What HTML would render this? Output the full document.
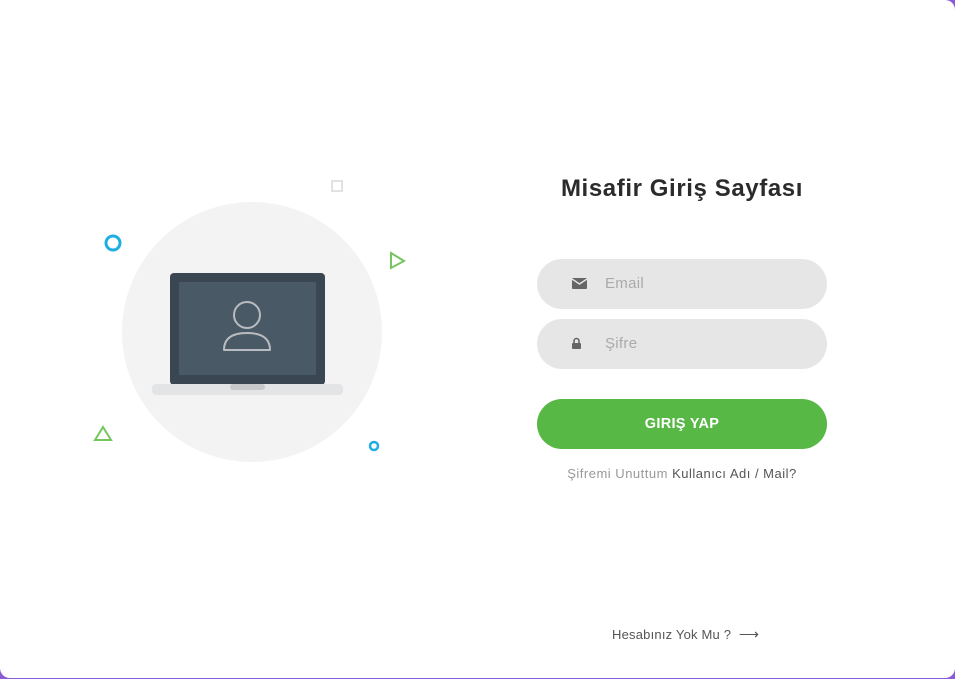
<!DOCTYPE html>
<html><head><meta charset="utf-8"><style>
*{margin:0;padding:0;box-sizing:border-box}
html,body{width:955px;height:679px;overflow:hidden;background:#8e5bd8}
.card{position:absolute;left:0;top:0;width:955px;height:678px;background:#fff;border-radius:0 10px 10px 10px;font-family:"Liberation Sans",sans-serif}
.abs{position:absolute}
h1{position:absolute;left:482px;width:400px;top:175px;text-align:center;font-size:24px;font-weight:bold;color:#2b2b2b;letter-spacing:0.6px}
.inp{position:absolute;left:537px;width:290px;height:50px;border-radius:25px;background:#e6e6e6;color:#aaa;font-size:15px;line-height:50px;padding-left:68px;letter-spacing:0.3px}
.btn{position:absolute;left:537px;top:399px;width:290px;height:50px;border-radius:25px;background:#57b846;color:#fff;font-weight:bold;font-size:14.5px;text-align:center;line-height:50px;letter-spacing:0.3px}
.fg{position:absolute;left:482px;width:400px;top:466px;text-align:center;font-size:13px;color:#999;letter-spacing:0.5px}
.fg b{font-weight:normal;color:#555}
.acc{position:absolute;left:612px;top:626px;font-size:13px;color:#555;letter-spacing:0.2px}
</style></head><body><div class="card">
<svg class="abs" style="left:0;top:0" width="480" height="500">
<circle cx="252" cy="332" r="130" fill="#f3f3f3"/>
<rect x="170" y="273" width="155" height="112" rx="4" fill="#3a4651"/>
<rect x="179" y="282" width="137" height="93" fill="#4a5966"/>
<rect x="152" y="384" width="191" height="11" rx="4" fill="#e3e4e6"/>
<rect x="230" y="384" width="35" height="6" rx="3" fill="#c8c9cb"/>
<circle cx="247" cy="315" r="13" fill="none" stroke="#b8bcc0" stroke-width="2"/>
<path d="M224 350 Q224 333 247 333 Q270 333 270 350 Z" fill="none" stroke="#b8bcc0" stroke-width="2" stroke-linejoin="round"/>
<circle cx="113" cy="243" r="7" fill="none" stroke="#1eaee3" stroke-width="3"/>
<circle cx="374" cy="446" r="4" fill="none" stroke="#1eaee3" stroke-width="2.5"/>
<rect x="332" y="181" width="10" height="10" fill="none" stroke="#e2e2e2" stroke-width="2"/>
<path d="M391 253 L404 261 L391 268 Z" fill="none" stroke="#74c65d" stroke-width="2"/>
<path d="M103 427 L111 440 L95 440 Z" fill="none" stroke="#74c65d" stroke-width="2"/>
</svg>
<h1>Misafir Giriş Sayfası</h1>
<div class="inp" style="top:259px">Email</div>
<svg class="abs" style="left:572px;top:278px" width="15" height="12"><rect x="0" y="0" width="15" height="11" rx="1" fill="#666"/><path d="M0 1 L7.5 6 L15 1" stroke="#e6e6e6" stroke-width="1.4" fill="none"/></svg>
<div class="inp" style="top:319px">Şifre</div>
<svg class="abs" style="left:571px;top:337px" width="11" height="13"><path d="M3 6 V4 a2.5 2.5 0 0 1 5 0 V6" stroke="#666" stroke-width="1.6" fill="none"/><rect x="1" y="6" width="9" height="6" rx="1" fill="#666"/></svg>
<div class="btn">GIRIŞ YAP</div>
<div class="fg">Şifremi Unuttum <b>Kullanıcı Adı / Mail?</b></div>
<div class="acc">Hesabınız Yok Mu ? &nbsp;<span style="font-size:14px">⟶</span></div>
</div></body></html>
